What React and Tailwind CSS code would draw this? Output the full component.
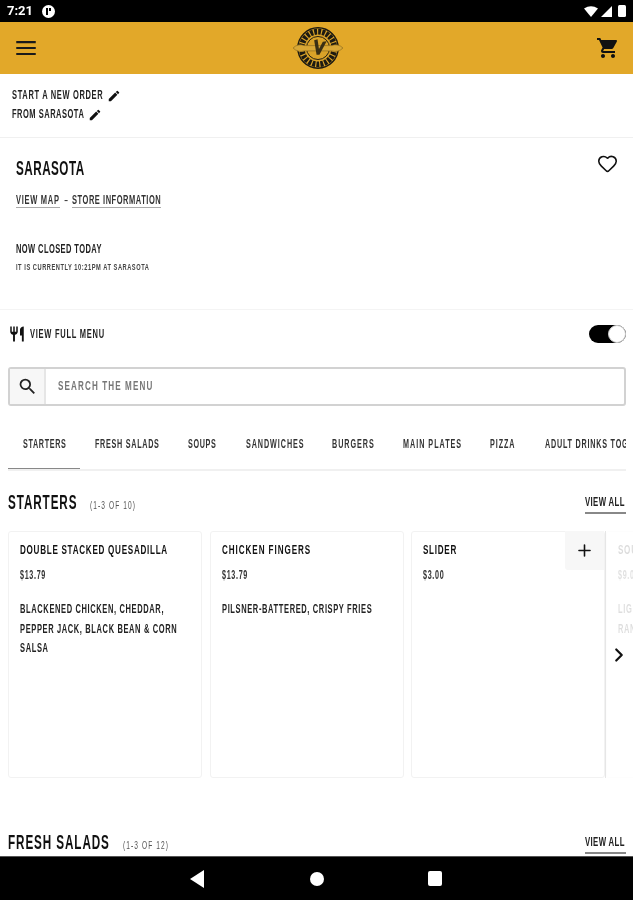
import React from 'react';
import { ChevronRight, Heart, Plus } from 'lucide-react';

const tabs = [
  { label: 'STARTERS', box: 'w-[43px]', track: 'tracking-[1.1px]' },
  { label: 'FRESH SALADS', box: 'w-[64px]', track: 'tracking-[1.2px]' },
  { label: 'SOUPS', box: 'w-[29px]', track: 'tracking-[1.1px]' },
  { label: 'SANDWICHES', box: 'w-[57px]', track: 'tracking-[1.55px]' },
  { label: 'BURGERS', box: 'w-[42px]', track: 'tracking-[1.6px]' },
  { label: 'MAIN PLATES', box: 'w-[58px]', track: 'tracking-[1.65px]' },
  { label: 'PIZZA', box: 'w-[26px]', track: 'tracking-[1.55px]' },
  { label: 'ADULT DRINKS TOGO', box: 'w-[92px]', track: 'tracking-[1.3px]' },
];

// the brand font is a tall condensed face, so squeeze Liberation Sans to get there
const N = ({ className = '', children }) => (
  <span className={`block shrink-0 whitespace-nowrap origin-left scale-x-[0.6] ${className}`}>{children}</span>
);

const Pencil = () => (
  <svg viewBox="0 0 24 24" className="w-[14px] h-[14px] shrink-0" fill="#111">
    <path d="M3 17.25V21h3.750L17.810 9.940l-3.750-3.750L3 17.250zM20.710 7.040a1 1 0 0 0 0-1.410l-2.340-2.340a1 1 0 0 0-1.410 0l-1.830 1.830 3.750 3.750 1.830-1.830z" />
  </svg>
);

const Logo = () => (
  <svg viewBox="0 0 56 50" className="w-[54px] h-[48px] blur-[0.6px]">
    <circle cx="28" cy="25" r="21" fill="#d9a228" stroke="#1c1a12" strokeWidth="1.500" />
    <circle cx="28" cy="25" r="17" fill="none" stroke="#1c1a12" strokeWidth="6" strokeDasharray="3 1.200" />
    <circle cx="28" cy="25" r="12" fill="#d9a228" stroke="#1c1a12" strokeWidth="1" />
    <path d="M2 25 Q7 20 14 22.500 L42 22.500 Q49 20 54 25 Q49 30 42 28 L14 28 Q7 30 2 25z" fill="#d9a836" stroke="#8a6a1e" strokeWidth="0.700" />
    <path d="M24 17 L26.500 32 L29.500 32 L37 18 L33 18.500 L29 26 L27.500 16z" fill="#3a2f14" />
  </svg>
);

const Card = ({ title, titleBox, price, priceBox, lines = [] }) => (
  <div className="w-[194px] h-[247px] shrink-0 rounded-[3px] border border-[#f2f2f2] px-[11px] pt-[10px] text-[#111]">
    <N className={`text-[13.5px] leading-[15px] font-bold ${titleBox}`}>{title}</N>
    <N className={`mt-[11px] text-[12px] leading-[14px] font-bold tracking-[1.1px] text-[#333] ${priceBox}`}>{price}</N>
    <div className="mt-[18px]">
      {lines.map(([text, box]) => (
        <N key={text} className={`text-[12.5px] leading-[19.5px] font-bold tracking-[1.05px] text-[#222] ${box}`}>{text}</N>
      ))}
    </div>
  </div>
);

const SectionHeading = ({ title, titleBox, count }) => (
  <div className="flex items-end justify-between pl-2 pr-[7px] h-[26px]">
    <div className="flex items-baseline">
      <N className={`text-[19.5px] leading-[24px] font-bold tracking-[1.5px] text-[#111] ${titleBox}`}>{title}</N>
      <N className="ml-[13px] w-[46px] text-[11px] leading-[14px] tracking-[1.8px] text-[#555]">{count}</N>
    </div>
    <a className="block w-[41px] border-b-2 border-[#888] pb-[3px]">
      <N className="w-[41px] text-[13px] leading-[15px] font-bold tracking-[0.6px] text-[#222]">VIEW ALL</N>
    </a>
  </div>
);

export default function App() {
  return (
    <div className="w-[633px] h-[900px] flex flex-col overflow-hidden bg-white font-['Liberation_Sans',sans-serif] blur-[0.4px]">
      {/* status bar */}
      <div className="h-[22px] shrink-0 bg-black flex items-center justify-between px-[7px] text-white">
        <div className="flex items-center gap-[9px]">
          <span className="text-[13px] font-bold font-['Roboto',sans-serif]">7:21</span>
          <span className="w-[13px] h-[13px] rounded-full bg-white flex items-center justify-center gap-[1px]">
            <span className="w-[2px] h-[7px] bg-black" />
            <span className="w-[2px] h-[3px] mb-[3px] bg-black" />
          </span>
        </div>
        <div className="flex items-center gap-[3px]">
          <svg viewBox="0 0 14 11" className="w-[14px] h-[11px]" fill="#fff"><path d="M0 2.500 Q7 -2 14 2.500 L7 11z" /></svg>
          <svg viewBox="0 0 11 11" className="w-[11px] h-[11px]" fill="#fff"><path d="M11 0 V11 H0z" /></svg>
          <span className="ml-[3px] w-[8px] h-[12px] rounded-[1.500px] bg-white" />
        </div>
      </div>

      {/* app bar */}
      <header className="h-[52px] shrink-0 bg-[#e2a829] flex items-center justify-between px-[13px]">
        <svg viewBox="0 0 24 24" className="w-[26px] h-[26px]" fill="#1a1a1a"><path d="M3 18.500h18v-2H3v2zm0-5.500h18v-2H3v2zM3 5.500v2h18v-2H3z" /></svg>
        <Logo />
        <svg viewBox="0 0 24 24" className="w-[24px] h-[24px]" fill="#111">
          <path d="M7 18c-1.100 0-1.990.900-1.990 2S5.900 22 7 22s2-.900 2-2-.900-2-2-2zM1 2v2h2l3.600 7.590-1.350 2.450c-.160.280-.250.610-.250.960 0 1.100.900 2 2 2h12v-2H7.420c-.140 0-.250-.110-.250-.250l.030-.120.900-1.630h7.450c.750 0 1.410-.410 1.750-1.030l3.580-6.490A1 1 0 0 0 20.010 4H5.210l-.940-2H1zm16 16c-1.100 0-1.990.900-1.990 2s.890 2 1.990 2 2-.900 2-2-.900-2-2-2z" />
        </svg>
      </header>

      <main className="flex-1 min-h-0 overflow-hidden">
        {/* order info */}
        <section className="h-[64px] border-b border-[#f0f0f0] px-3 pt-[12px] text-[12.5px] font-bold text-[#222]">
          <div className="h-[19px] flex items-center gap-[4px]"><N className="w-[91px] tracking-[1.1px]">START A NEW ORDER</N><Pencil /></div>
          <div className="h-[19px] flex items-center gap-[5px]"><N className="w-[71px] tracking-[0.85px]">FROM SARASOTA</N><Pencil /></div>
        </section>

        {/* store */}
        <section className="relative h-[172px] border-b border-[#f4f4f4] px-4 pt-[20px] text-[#222]">
          <N className="w-[68px] text-[19.5px] leading-[20px] font-bold tracking-[0.8px] text-[#111]">SARASOTA</N>
          <Heart size={21} strokeWidth={1.800} className="absolute right-[15px] top-[15px] text-[#111]" />
          <div className="mt-[15px] flex items-start text-[12.5px] leading-[14px] font-bold text-[#333]">
            <a className="block w-[44px] border-b border-[#aaa]"><N className="tracking-[1.2px]">VIEW MAP</N></a>
            <span className="w-[12px] text-center font-normal">-</span>
            <a className="block w-[89px] border-b border-[#aaa]"><N className="tracking-[0.9px]">STORE INFORMATION</N></a>
          </div>
          <N className="mt-[34px] w-[86px] text-[12.5px] leading-[14px] font-bold tracking-[0.7px]">NOW CLOSED TODAY</N>
          <N className="mt-[5px] w-[133px] text-[9.5px] leading-[12px] font-bold tracking-[0.9px] text-[#444]">IT IS CURRENTLY 10:21PM AT SARASOTA</N>
        </section>

        {/* menu toggle */}
        <div className="h-[48px] flex items-center justify-between pl-[8px] pr-[7px]">
          <div className="flex items-center gap-[4px] text-[12.5px] font-bold tracking-[1.25px] text-[#222]">
            <svg viewBox="0 0 24 24" className="w-[18px] h-[18px]" fill="#111">
              <path d="M11 9H9V2H7v7H5V2H3v7c0 2.120 1.660 3.840 3.750 3.970V22h2.500v-9.030C11.340 12.840 13 11.120 13 9V2h-2v7zm5-3v8h2.500v8H21V2c-2.760 0-5 2.240-5 4z" />
            </svg>
            <N className="w-[75px]">VIEW FULL MENU</N>
          </div>
          <div className="relative w-[37px] h-[18px] rounded-full bg-black">
            <span className="absolute right-0 top-0 w-[18px] h-[18px] rounded-full bg-white border border-[#ccc]" />
          </div>
        </div>

        {/* search */}
        <div className="ml-2 mr-[7px] mt-[9px] h-[39px] flex rounded-[3px] border-2 border-[#d2d2d2]">
          <div className="w-[36px] shrink-0 bg-[#f7f7f7] border-r-2 border-[#e6e6e6] flex items-center justify-center">
            <svg viewBox="0 0 24 24" className="w-[21px] h-[21px]" fill="#222">
              <path d="M15.500 14h-.790l-.280-.270A6.471 6.471 0 0 0 16 9.500 6.500 6.500 0 1 0 9.500 16c1.610 0 3.090-.590 4.230-1.570l.270.280v.790l5 4.990L20.490 19l-4.990-5zm-6 0C7.010 14 5 11.990 5 9.500S7.010 5 9.500 5 14 7.010 14 9.500 11.990 14 9.500 14z" />
            </svg>
          </div>
          <div className="flex-1 flex items-center pl-[12px] text-[13.5px] font-bold tracking-[1.85px] text-[#777]">
            <N className="w-[94px]">SEARCH THE MENU</N>
          </div>
        </div>

        {/* tabs */}
        <nav className="ml-2 mr-[7px] mt-[19px] h-[46px] border-b-2 border-[#f0f0f0] flex overflow-hidden text-[12px] leading-[14px] font-bold text-[#333]">
          {tabs.map((tab, i) => (
            <div key={tab.label} className={i === 0 ? 'h-[46px] shrink-0 pl-[15px] pr-[14px] pt-[12px] border-b-[3px] border-[#888]' : 'h-[46px] shrink-0 pl-[15px] pr-[14px] pt-[12px]'}>
              <N className={`${tab.box} ${tab.track}`}>{tab.label}</N>
            </div>
          ))}
        </nav>

        <div className="mt-[17px]">
          <SectionHeading title="STARTERS" titleBox="w-[69px]" count="(1-3 OF 10)" />
        </div>

        {/* cards */}
        <div className="relative mt-[17px] ml-2 flex gap-[7.500px] overflow-hidden">
          <Card
            title={<span className="tracking-[1.2px]">DOUBLE STACKED QUESADILLA</span>} titleBox="w-[148px]"
            price="$13.79" priceBox="w-[27px]"
            lines={[
              ['BLACKENED CHICKEN, CHEDDAR,', 'w-[144px]'],
              ['PEPPER JACK, BLACK BEAN & CORN', 'w-[157px]'],
              ['SALSA', 'w-[24px]'],
            ]}
          />
          <Card
            title={<span className="tracking-[1.55px]">CHICKEN FINGERS</span>} titleBox="w-[90px]"
            price="$13.79" priceBox="w-[27px]"
            lines={[['PILSNER-BATTERED, CRISPY FRIES', 'w-[149px]']]}
          />
          <Card title={<span className="tracking-[1.2px]">SLIDER</span>} titleBox="w-[36px]" price="$3.00" priceBox="w-[25px]" />
          <div className="-ml-[6.500px]">
            <Card title={<span className="tracking-[1.2px]">SOUTHWEST</span>} titleBox="w-[60px]" price="$9.00" priceBox="w-[25px]" lines={[['LIGHTLY', 'w-[40px]'], ['RANCH', 'w-[30px]']]} />
          </div>
          <div className="absolute left-[597px] top-0 bottom-0 w-[28px] bg-white/85 border-l border-[#e6e6e6] flex items-center justify-center">
            <ChevronRight size={22} strokeWidth={2.400} className="text-[#111] mr-[2px]" />
          </div>
          <div className="absolute left-[557px] top-0 w-[39px] h-[39px] rounded-bl-[3px] bg-[#f7f7f7] flex items-center justify-center">
            <Plus size={19} strokeWidth={2} className="text-[#111]" />
          </div>
        </div>

        <div className="mt-[50px]">
          <SectionHeading title="FRESH SALADS" titleBox="w-[102px]" count="(1-3 OF 12)" />
        </div>
      </main>

      {/* nav bar */}
      <div className="h-[44px] shrink-0 bg-black flex items-center justify-center pr-[2px] border-t border-[#555]">
        <svg viewBox="0 0 14 18" className="w-[14px] h-[18px] mr-[106px]" fill="#fff"><path d="M14 0 V18 L0 9z" /></svg>
        <span className="w-[14px] h-[14px] mr-[104px] rounded-full bg-white" />
        <span className="w-[14px] h-[15px] rounded-[2px] bg-white" />
      </div>
    </div>
  );
}
